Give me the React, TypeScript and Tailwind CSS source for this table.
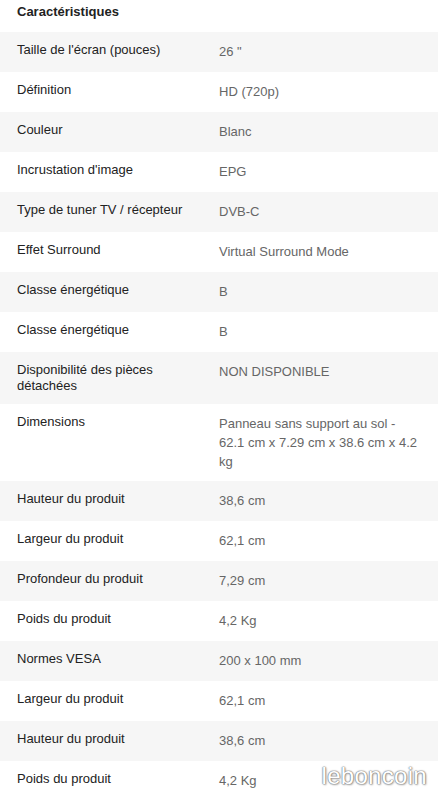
const rows: { label: string; value: string }[] = [
  { label: "Taille de l'écran (pouces)", value: '26 "' },
  { label: "Définition", value: "HD (720p)" },
  { label: "Couleur", value: "Blanc" },
  { label: "Incrustation d'image", value: "EPG" },
  { label: "Type de tuner TV / récepteur", value: "DVB-C" },
  { label: "Effet Surround", value: "Virtual Surround Mode" },
  { label: "Classe énergétique", value: "B" },
  { label: "Classe énergétique", value: "B" },
  { label: "Disponibilité des pièces détachées", value: "NON DISPONIBLE" },
  { label: "Dimensions", value: "Panneau sans support au sol - 62.1 cm x 7.29 cm x 38.6 cm x 4.2 kg" },
  { label: "Hauteur du produit", value: "38,6 cm" },
  { label: "Largeur du produit", value: "62,1 cm" },
  { label: "Profondeur du produit", value: "7,29 cm" },
  { label: "Poids du produit", value: "4,2 Kg" },
  { label: "Normes VESA", value: "200 x 100 mm" },
  { label: "Largeur du produit", value: "62,1 cm" },
  { label: "Hauteur du produit", value: "38,6 cm" },
  { label: "Poids du produit", value: "4,2 Kg" },
];

export default function App() {
  return (
    <main className="relative h-[800px] w-[438px] overflow-hidden bg-white font-['Liberation_Sans',Arial,sans-serif]">
      <h2 className="h-8 px-[17px] pt-1 text-[13px] leading-4 font-bold text-[#222]">Caractéristiques</h2>
      <div>
        {rows.map((row, i) => (
          <div
            key={i}
            className={`grid min-h-[40px] grid-cols-2 py-[10px] ${i % 2 === 0 ? "bg-[#f6f6f6]" : "bg-white"}`}
          >
            <div className="pl-[17px] pr-4 text-[13px] leading-4 text-[#222]">{row.label}</div>
            <div className="pr-[15px] text-[13px] leading-[19px] text-[#666]">{row.value}</div>
          </div>
        ))}
      </div>
      <span className="absolute right-[11px] bottom-[12px] text-[24px] leading-none tracking-[0.3px] text-white [text-shadow:0_0_1px_#777,0_0_1px_#777,0_0_2px_#999,1px_1px_2px_rgba(0,0,0,0.3)]">
        leboncoin
      </span>
    </main>
  );
}
